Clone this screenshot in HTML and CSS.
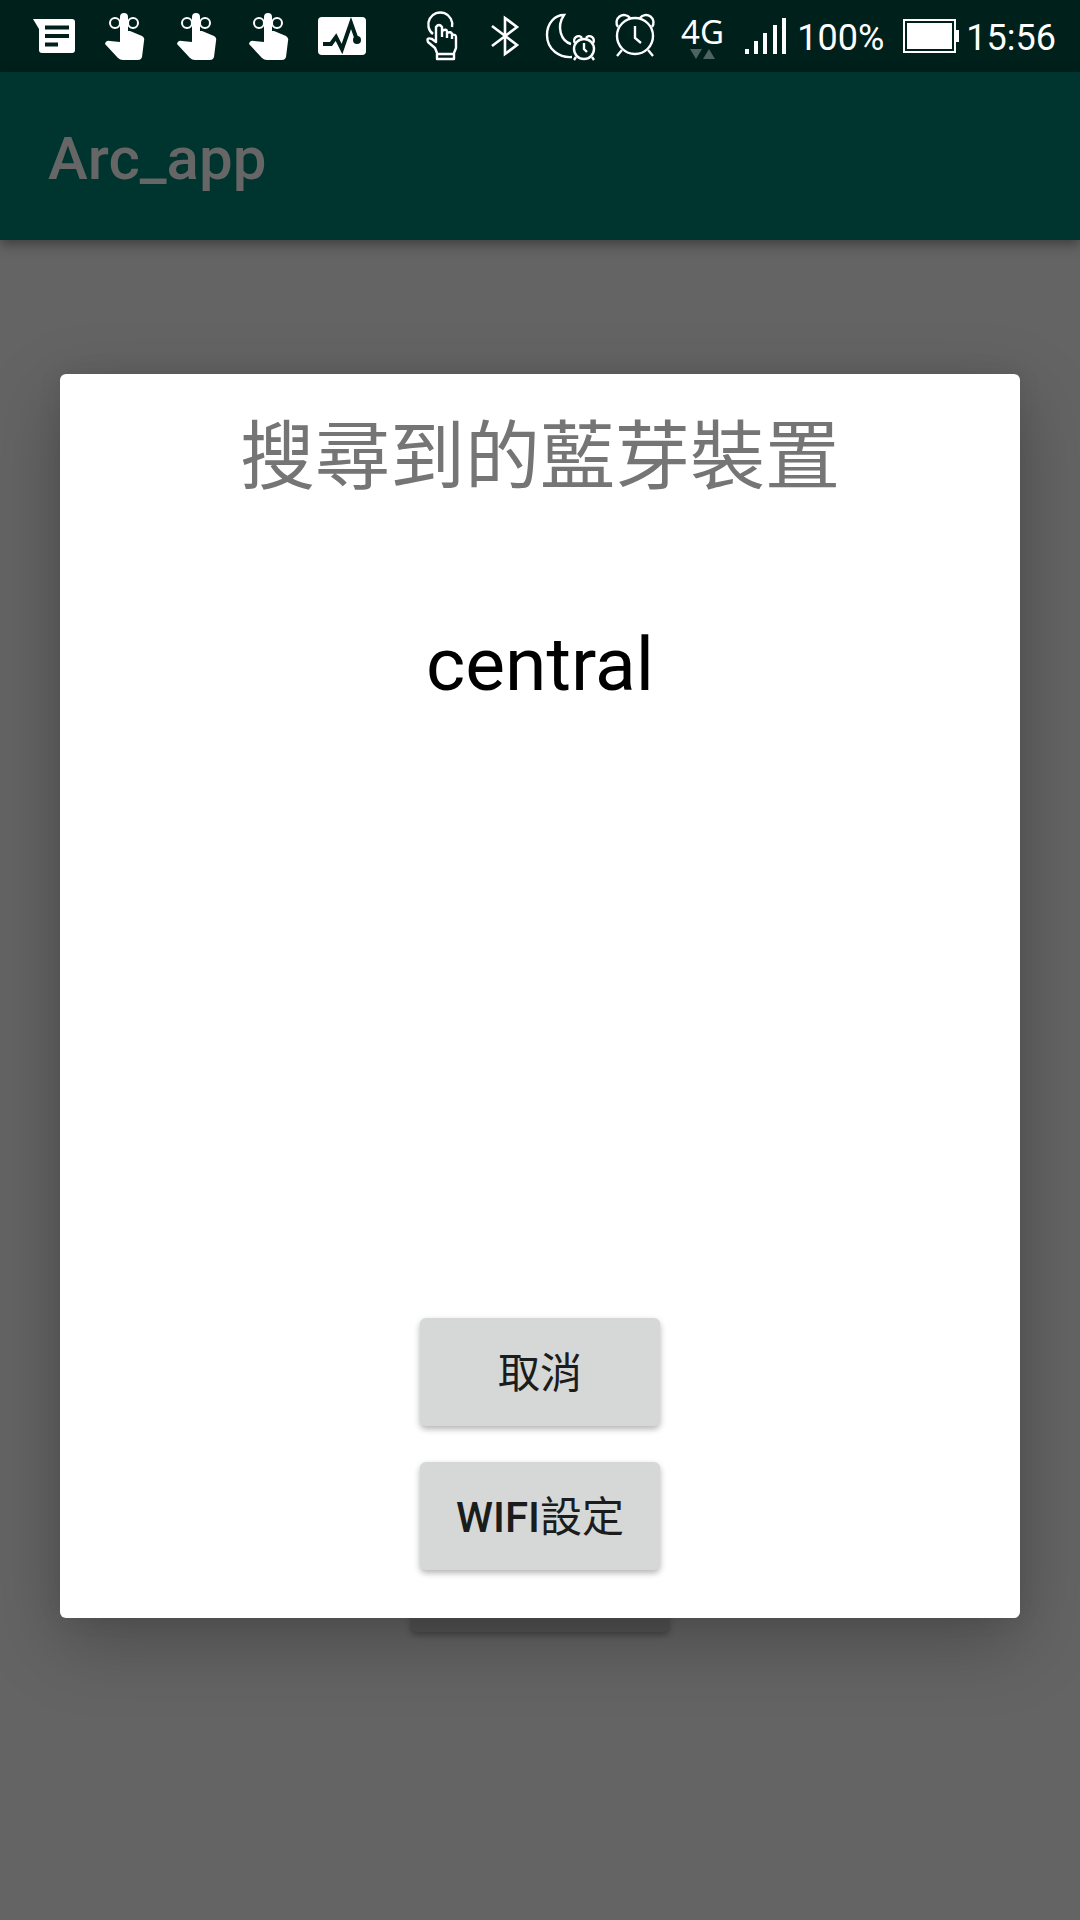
FILE: index.html
```html
<!DOCTYPE html>
<html lang="zh-Hant">
<head>
<meta charset="utf-8">
<meta name="viewport" content="width=device-width, initial-scale=1">
<title>Arc_app</title>
<link rel="stylesheet" href="styles.css">
</head>
<body>
<svg class="defs" aria-hidden="true">
  <symbol id="touch" viewBox="0 0 72 72">
    <circle cx="25" cy="23" r="5" fill="none" stroke="#fff" stroke-width="2"/>
    <circle cx="43" cy="23" r="5" fill="none" stroke="#fff" stroke-width="2"/>
    <path fill="#fff" d="M30 42V17a4 4 0 0 1 8 0v14h2l12 5q3 2 2 5l-2 16q-1 3-4 3H33q-3 0-5-2L15 44q1-4 5-3z"/>
  </symbol>
</svg>

<div class="status">
  <div class="group">
    <svg class="slot" viewBox="0 0 72 72" role="img" aria-label="Message">
      <path fill="#fff" d="M15 19h39q3 0 3 3v28q0 3-3 3H24q-3 0-3-3V29z"/>
      <path stroke="#00201c" stroke-width="4" d="M27 27.500h24M27 36h24M27 44.500h13"/>
    </svg>
    <svg class="slot" viewBox="0 0 72 72" role="img" aria-label="Touch"><use href="#touch"/></svg>
    <svg class="slot" viewBox="0 0 72 72" role="img" aria-label="Touch"><use href="#touch"/></svg>
    <svg class="slot" viewBox="0 0 72 72" role="img" aria-label="Touch"><use href="#touch"/></svg>
    <svg class="slot" viewBox="0 0 72 72" role="img" aria-label="Activity">
      <rect x="12" y="17" width="48" height="38" rx="4" fill="#fff"/>
      <path fill="none" stroke="#00201c" stroke-width="4" d="M17 44h8l5-7 6 12 9-26 6 17"/>
      <circle cx="51" cy="40" r="4" fill="#00201c"/>
    </svg>
  </div>
  <div class="group">
    <svg class="touch" viewBox="418 0 52 72" role="img" aria-label="Touch assist">
      <g fill="none" stroke="#fff" stroke-width="2.400" stroke-linejoin="round">
        <path d="M433 34a12 12 0 1 1 19-7"/>
        <path d="M437 53l-2-5-7-6q-2-5 4-3l4 3V27q3-4 6 0v10M442 31q5-3 5 1v6M447 33q4-2 5 1v5M452 35q4-1 4 2v11l-2 5M437 54h17v5H437z"/>
      </g>
    </svg>
    <svg class="bluetooth" viewBox="470 0 64 72" role="img" aria-label="Bluetooth">
      <path fill="none" stroke="#fff" stroke-width="2.600" d="M492 26l25 19-12 9V18l12 9-25 19"/>
    </svg>
    <svg class="moon" viewBox="534 0 72 72" role="img" aria-label="Do not disturb">
      <g fill="none" stroke="#fff" stroke-width="2.400">
        <path d="M572 57c-12 1-25-7-25-22 0-12 8-20 17-20-8 12-3 26 7 29"/>
        <circle cx="584" cy="49" r="10"/>
        <path d="M584 43v6l3 3M576 57l-2 3M592 57l2 3M575 43a4 4 0 0 1 7-5M593 43a4 4 0 0 0-7-5"/>
      </g>
    </svg>
    <svg class="alarm" viewBox="606 0 62 72" role="img" aria-label="Alarm">
      <g fill="none" stroke="#fff" stroke-width="2.400">
        <circle cx="635" cy="36" r="18"/>
        <path d="M635 26v12l6 5M622 50l-5 6M648 50l5 6M618 27a6.500 6.500 0 0 1 12-9M652 27a6.500 6.500 0 0 0-12-9"/>
      </g>
    </svg>
    <svg class="network" viewBox="668 0 68 72">
      <text class="network-label" x="681" y="44">4G</text>
      <path fill="#4d635f" d="M690 49h12l-6 10zM703 59h12l-6-10z"/>
    </svg>
    <svg class="signal" viewBox="736 0 61 72" role="img" aria-label="Signal">
      <path fill="#fff" d="M745 49h4v5h-4zM754 41h4v13h-4zM763 33h4v21h-4zM773 25h4v29h-4zM782 18h4v36h-4z"/>
    </svg>
    <span class="status-text">100%</span>
    <svg class="battery" viewBox="884 0 82 72" role="img" aria-label="Battery">
      <rect x="904" y="20" width="51" height="32" fill="none" stroke="#fff" stroke-width="2"/>
      <path fill="#fff" d="M907 23h45v26h-45zM955 30h4v12h-4z"/>
    </svg>
    <time class="status-text">15:56</time>
  </div>
</div>

<header class="appbar"><h1 class="app-title">Arc_app</h1></header>

<main class="page"><div class="page-button"></div></main>

<div class="overlay">
  <section class="dialog" role="dialog" aria-labelledby="dialog-title">
    <h2 class="dialog-title" id="dialog-title">搜尋到的藍芽裝置</h2>
    <ul class="devices"><li>central</li></ul>
    <div class="actions">
      <button class="action" type="button">取消</button>
      <button class="action" type="button"><span class="latin">WIFI</span>設定</button>
    </div>
  </section>
</div>
</body>
</html>
```
FILE: styles.css
```css
* { box-sizing: border-box; }

body {
  margin: 0;
  min-height: 100vh;
  display: flex;
  flex-direction: column;
  background: #646464;
  font-family: Roboto, "Noto Sans CJK TC", sans-serif;
}

.defs { position: absolute; width: 0; height: 0; }

.status {
  height: 72px;
  padding: 0 24px 0 18px;
  display: flex;
  justify-content: space-between;
  background: #00201c;
  color: #fff;
}

.group { display: flex; align-items: center; }
.group svg { flex: none; height: 72px; }
.slot { width: 72px; }
.touch { width: 52px; }
.bluetooth { width: 64px; }
.moon { width: 72px; }
.alarm { width: 62px; }
.network { width: 68px; }
.signal { width: 61px; }
.battery { width: 82px; }

.network-label { fill: #fff; font: 33px "Noto Sans", sans-serif; }
.status-text { font-size: 36px; line-height: 42px; padding-top: 4px; }

.appbar {
  position: relative;
  height: 168px;
  padding: 0 48px;
  display: flex;
  align-items: center;
  background: #00352f;
  box-shadow: 0 4px 12px rgba(0, 0, 0, 0.4);
}

.app-title {
  margin: 0;
  padding-top: 6px;
  color: #666;
  font-size: 60px;
  line-height: 70px;
  font-weight: 500;
}

.page {
  flex: 1;
  display: flex;
  justify-content: center;
  align-items: flex-end;
  padding-bottom: 288px;
}

.page-button {
  width: 258px;
  height: 108px;
  border-radius: 6px;
  background: #545454;
  box-shadow: 0 3px 6px rgba(0, 0, 0, 0.3);
}

.overlay {
  position: absolute;
  inset: 72px 0 0;
  display: flex;
  align-items: center;
  padding: 0 60px;
}

.dialog {
  flex: 1;
  padding: 22px 0 48px;
  border-radius: 6px;
  background: #fff;
  box-shadow: 0 24px 72px rgba(0, 0, 0, 0.25), 0 0 24px rgba(0, 0, 0, 0.08);
}

.dialog-title {
  margin: 0;
  color: #757575;
  font: 400 75px/110px "Noto Sans CJK TC", sans-serif;
  text-align: center;
}

.devices {
  margin: 0;
  padding: 114px 0 0;
  min-height: 812px;
  list-style: none;
  color: #000;
  font-size: 75px;
  line-height: 88px;
  text-align: center;
}

.actions {
  display: flex;
  flex-direction: column;
  align-items: center;
  gap: 36px;
}

.action {
  min-width: 240px;
  height: 108px;
  padding: 4px 24px 0;
  border: 0;
  border-radius: 6px;
  background: #d6d8d7;
  box-shadow: 0 3px 6px rgba(0, 0, 0, 0.3);
  color: #1b1c1c;
  font: 400 42px/50px Roboto, "Noto Sans CJK TC", sans-serif;
}

.latin { font-weight: 500; }
```
